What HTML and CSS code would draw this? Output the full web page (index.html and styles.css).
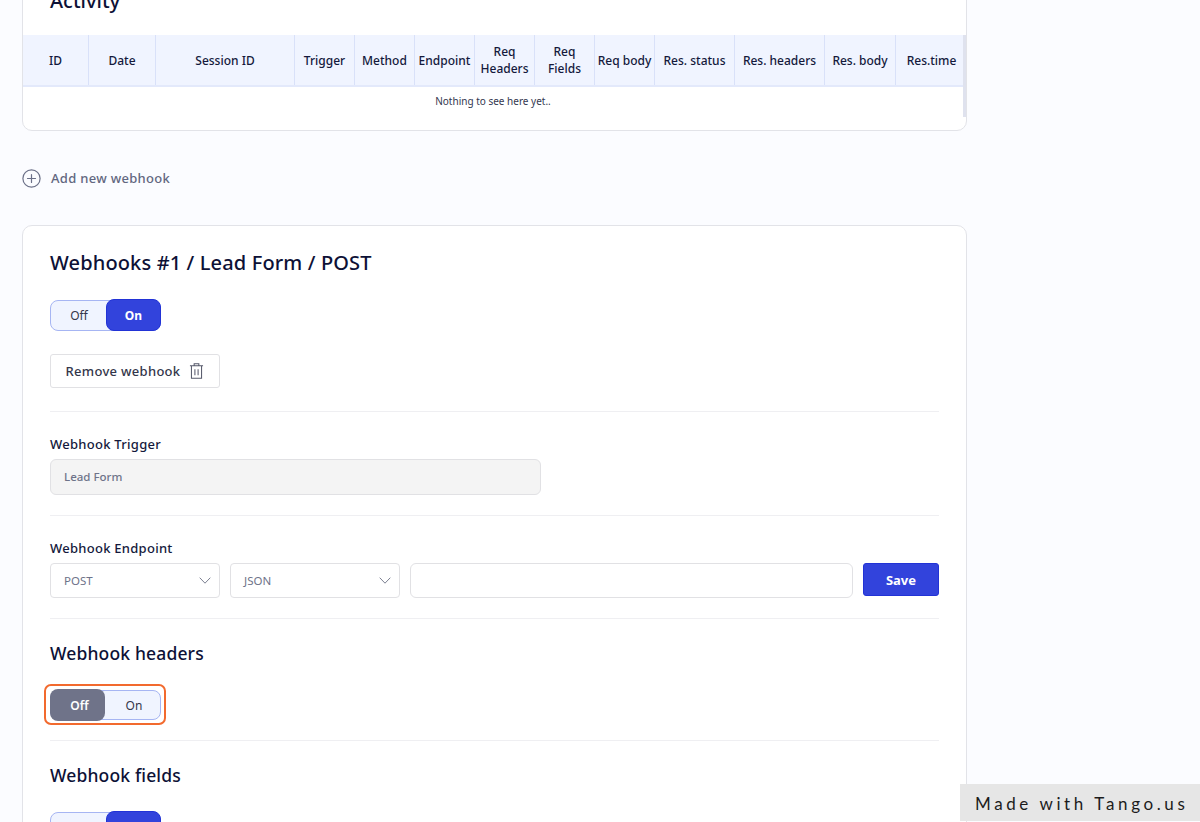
FILE: index.html
```html
<!DOCTYPE html>
<html lang="en">
<head>
<meta charset="utf-8">
<title>Webhooks</title>
<link rel="stylesheet" href="styles.css">
</head>
<body>
<main class="page">
  <section class="card activity">
    <h2 class="activity-title">Activity</h2>
    <div class="table">
      <div class="thead">
        <div class="th">ID</div>
        <div class="th">Date</div>
        <div class="th">Session ID</div>
        <div class="th">Trigger</div>
        <div class="th">Method</div>
        <div class="th">Endpoint</div>
        <div class="th wrap">Req Headers</div>
        <div class="th wrap">Req Fields</div>
        <div class="th">Req body</div>
        <div class="th">Res. status</div>
        <div class="th">Res. headers</div>
        <div class="th">Res. body</div>
        <div class="th last">Res.time</div>
      </div>
      <div class="empty">Nothing to see here yet..</div>
    </div>
  </section>

  <div class="add-row">
    <svg class="add-icon" width="19" height="19" viewBox="0 0 19 19" fill="none" stroke="#6b7088" stroke-width="1.2" stroke-linecap="round"><circle cx="9.5" cy="9.5" r="8.6"/><path d="M9.5 5.5v8M5.5 9.5h8"/></svg>
    <span class="add-label">Add new webhook</span>
  </div>

  <section class="card webhook">
    <h2 class="webhook-title">Webhooks #1 / Lead Form / POST</h2>
    <div class="toggle first-toggle">
      <span class="opt">Off</span>
      <span class="opt active-on">On</span>
    </div>
    <button class="remove" type="button">
      <span>Remove webhook</span>
      <svg width="15" height="18" viewBox="0 0 16 18" fill="none" stroke="#55586a" stroke-width="1.1"><path d="M1 3.5h14M5.5 3.5V1.2h5v2.3M2.6 3.5v13.3h10.8V3.5M6.3 7v6.6M9.7 7v6.6"/></svg>
    </button>
    <hr class="rule rule-a">
    <div class="label">Webhook Trigger</div>
    <div class="field disabled">Lead Form</div>
    <hr class="rule rule-b">
    <div class="label endpoint-label">Webhook Endpoint</div>
    <div class="endpoint-row">
      <div class="field select">POST
        <svg width="12" height="7" viewBox="0 0 12 7" fill="none" stroke="#7b7f90" stroke-width="1"><path d="M.7.7 6 6.2 11.3.7"/></svg>
      </div>
      <div class="field select">JSON
        <svg width="12" height="7" viewBox="0 0 12 7" fill="none" stroke="#7b7f90" stroke-width="1"><path d="M.7.7 6 6.2 11.3.7"/></svg>
      </div>
      <div class="field url"></div>
      <button class="save" type="button">Save</button>
    </div>
    <hr class="rule rule-c">
    <h3 class="sub headers-title">Webhook headers</h3>
    <div class="highlight">
      <div class="toggle">
        <span class="opt active-off">Off</span>
        <span class="opt shifted">On</span>
      </div>
    </div>
    <hr class="rule rule-d">
    <h3 class="sub fields-title">Webhook fields</h3>
    <div class="toggle">
      <span class="opt">Off</span>
      <span class="opt active-on">On</span>
    </div>
  </section>
</main>
<div class="tango">Made with Tango.us</div>
</body>
</html>
```

FILE: styles.css
```css
* { box-sizing: border-box; }
html, body { margin: 0; height: 822px; overflow: hidden; }
body {
  background: #fbfcff;
  font-family: "Noto Sans", "Open Sans", sans-serif;
  color: #0d1136;
}
.page { width: 967px; padding-left: 22px; margin-top: -40px; }
.card {
  background: #fff;
  border: 1px solid #e2e3e8;
  border-radius: 10px;
}
.activity { height: 171px; padding-top: 25px; }
.activity-title {
  margin: 0 0 0 27px;
  font-size: 20px;
  line-height: 30px;
  font-weight: 500;
}
.table { margin-top: 19px; border-right: 3px solid #dfe2ee; height: 82px; }
.thead {
  display: grid;
  grid-template-columns: 66px 67px 139px 60px 60px 60px 60px 60px 60px 80px 90px 71px 1fr;
  height: 52px;
  background: #f0f4ff;
  border-bottom: 2px solid #e3e9fb;
}
.th {
  display: flex;
  align-items: center;
  justify-content: center;
  text-align: center;
  font-size: 12px;
  line-height: 17px;
  font-weight: 500;
  color: #14193c;
  border-right: 1px solid #d9e1f9;
  white-space: nowrap;
}
.th.wrap { white-space: normal; padding: 0 8px; }
.th.last { border-right: 0; padding-left: 4px; }
.empty {
  text-align: center;
  font-size: 10px;
  line-height: 14px;
  padding-top: 7px;
  color: #33374f;
}
.add-row {
  display: flex;
  align-items: center;
  gap: 10px;
  margin-top: 37px;
  height: 20px;
}
.add-icon { display: block; }
.add-label { font-size: 13px; font-weight: 500; letter-spacing: 0.3px; color: #626780; }
.webhook { margin-top: 37px; height: 640px; padding: 0 27px; }
.webhook-title {
  margin: 21px 0 0;
  font-size: 20px;
  line-height: 32px;
  font-weight: 500;
  letter-spacing: 0.14px;
}
.toggle {
  display: flex;
  width: 111px;
  height: 31px;
  background: #f0f4ff;
  border: 1px solid #a6b5f3;
  border-radius: 8px;
}
.first-toggle { margin-top: 21px; }
.opt {
  flex: 1;
  display: flex;
  align-items: center;
  justify-content: center;
  font-size: 12px;
  color: #33364a;
}
.opt.shifted { padding-left: 4px; }
.active-on, .active-off {
  flex: 0 0 55px;
  margin: -2px -1px -1px;
  height: 32px;
  border-radius: 8px;
  color: #fff;
  font-weight: 700;
}
.active-on { background: #3243dc; border: 1px solid #2233d6; }
.active-off { background: #6f7389; font-weight: 600; padding-left: 4px; }
.remove {
  display: flex;
  align-items: center;
  justify-content: center;
  gap: 9px;
  width: 170px;
  height: 34px;
  margin-top: 23px;
  background: #fff;
  border: 1px solid #e1e1e4;
  border-radius: 3px;
  font: 500 13px "Noto Sans", sans-serif;
  letter-spacing: 0.3px;
  color: #33364a;
}
.rule { border: 0; border-top: 1px solid #efeff2; margin: 0; }
.rule-a { margin-top: 23px; }
.label { font-size: 13px; font-weight: 500; line-height: 18px; letter-spacing: 0.27px; color: #14193c; }
.rule-a + .label { margin-top: 23px; }
.field {
  background: #fff;
  border: 1px solid #e1e1e4;
  border-radius: 6px;
  font-size: 11.5px;
  color: #6e7389;
  display: flex;
  align-items: center;
  padding: 0 13px;
}
.disabled {
  width: 491px;
  height: 36px;
  margin-top: 6px;
  padding-bottom: 2px;
  background: #f4f4f4;
  font-weight: 500;
}
.rule-b { margin-top: 20px; }
.endpoint-label { margin-top: 23px; }
.endpoint-row { display: flex; gap: 10px; margin-top: 6px; align-items: flex-start; }
.select { width: 170px; height: 35px; justify-content: space-between; border-radius: 4px; padding-right: 8px; }
.url { flex: 1; height: 35px; }
.save {
  width: 76px;
  height: 33px;
  background: #3243dc;
  border: 1px solid #2233d6;
  border-radius: 3px;
  color: #fff;
  font: 700 13px "Noto Sans", sans-serif;
}
.rule-c { margin-top: 20px; }
.sub { margin: 0; font-size: 17.5px; font-weight: 500; line-height: 24px; letter-spacing: 0.15px; }
.headers-title { margin-top: 22px; }
.highlight {
  width: 122px;
  height: 41px;
  margin: 19px 0 0 -6px;
  padding: 4px;
  border: 2px solid #f26a2e;
  border-radius: 7px;
}
.highlight .toggle { height: 30px; }
.rule-d { margin-top: 15px; }
.fields-title { margin-top: 22px; margin-bottom: 25px; }
.tango {
  position: fixed;
  right: 0;
  top: 784px;
  width: 240px;
  height: 37px;
  background: #e6e6e6;
  display: flex;
  align-items: center;
  padding: 1px 0 0 15px;
  font-family: "Lato", sans-serif;
  font-size: 17px;
  letter-spacing: 3.6px;
  color: #1c1c1c;
  white-space: nowrap;
}
```
